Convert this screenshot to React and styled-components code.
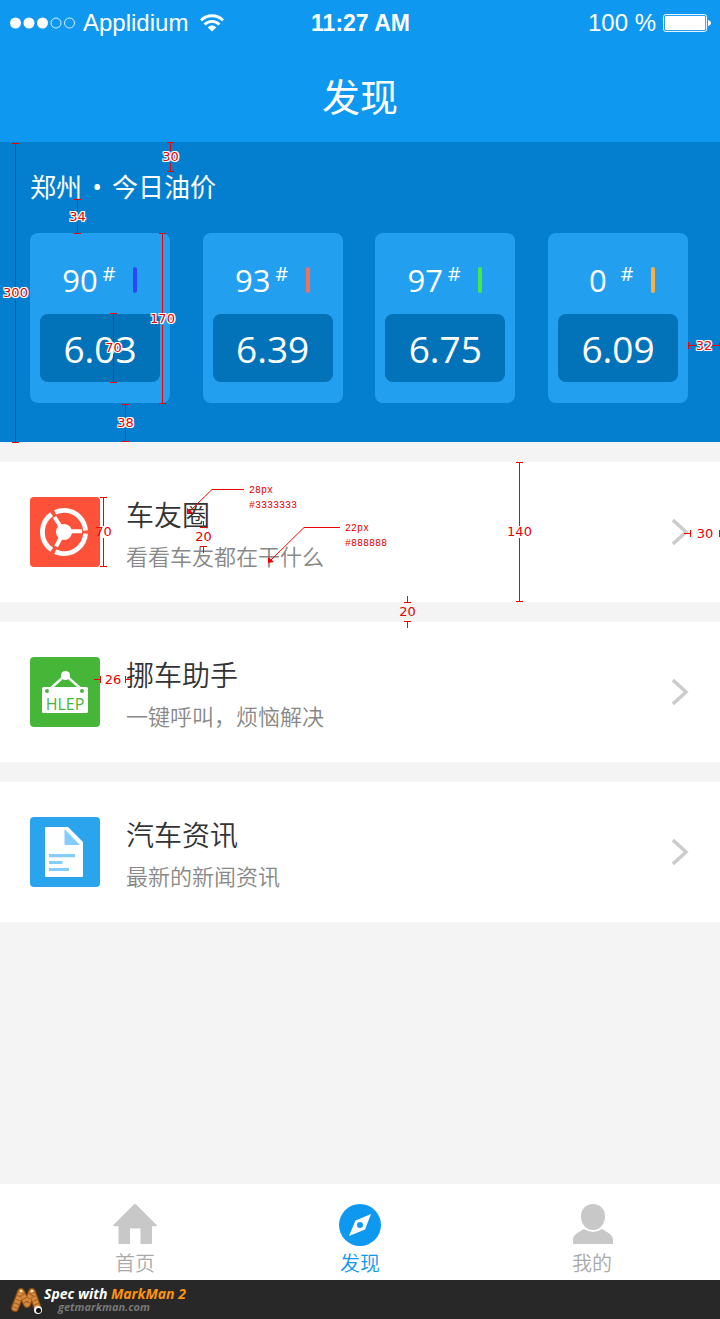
import React from "react";
import styled, { createGlobalStyle, css } from "styled-components";

const cjk = `"Open Sans", "Noto Sans CJK SC", sans-serif`;

const GlobalStyle = createGlobalStyle`
  * { box-sizing: border-box; }
  body { margin: 0; background: #f4f4f4; font-family: "Noto Sans CJK SC", sans-serif; font-weight: 350; }
  h1, h2, h3, p, ul { margin: 0; padding: 0; font-weight: inherit; }
  a { color: inherit; text-decoration: none; }
  svg { display: block; flex: none; }
`;

const Page = styled.div`
  display: flex;
  flex-direction: column;
  min-height: 100vh;
`;

/* ---------- header ---------- */
const Header = styled.header`
  background: #0f98f0;
  color: #fff;
`;
const StatusBar = styled.div`
  display: grid;
  grid-template-columns: 1fr auto 1fr;
  align-items: center;
  height: 46px;
  padding: 0 9px 0 10px;
  font-family: "Liberation Sans", sans-serif;
  font-size: 24px;
  font-weight: 400;
`;
const StatusGroup = styled.div`
  display: flex;
  align-items: center;
  justify-content: ${(p) => (p.$end ? "flex-end" : "flex-start")};
  gap: 7px;
`;
const Carrier = styled.span`
  margin-right: 5px;
`;
const Clock = styled.time`
  font-size: 23px;
  font-weight: 700;
`;
const PageTitle = styled.h1`
  height: 96px;
  font-size: 38px;
  font-weight: 400;
  line-height: 98px;
  text-align: center;
`;

/* ---------- oil prices ---------- */
const PricePanel = styled.section`
  position: relative;
  height: 300px;
  padding: 25px 32px 0 30px;
  background: #047fcf;
  color: #fff;
`;
const PanelTitle = styled.h2`
  display: flex;
  height: 66px;
  font-size: 26px;
  font-weight: 400;
  line-height: 38px;
`;
const Dot = styled.span`
  width: 30px;
  font-family: ${cjk};
  text-align: center;
`;
const Cards = styled.div`
  display: flex;
  justify-content: space-between;
`;
const Card = styled.article`
  width: 140px;
  height: 170px;
  padding: 0 10px;
  border-radius: 8px;
  background: #229fee;
  font-family: ${cjk};
  font-weight: 400;
`;
const Grade = styled.div`
  display: flex;
  align-items: center;
  height: 81px;
  padding: 12px 0 0 22px;
`;
const GradeNumber = styled.span`
  width: 36px;
  font-size: 31px;
  line-height: 40px;
  text-align: center;
`;
const Hash = styled.sup`
  width: 22px;
  margin-bottom: 12px;
  font-size: 20px;
  line-height: 24px;
  text-align: center;
`;
const GradeBar = styled.span`
  width: 4px;
  height: 26px;
  margin-left: 13px;
  border-radius: 2px;
  background: ${(p) => p.$color};
`;
const Price = styled.div`
  height: 68px;
  border-radius: 8px;
  background: #0273b9;
  font-size: 37px;
  line-height: 70px;
  text-align: center;
`;

/* ---------- menu ---------- */
const Menu = styled.nav`
  flex: 1;
  display: flex;
  flex-direction: column;
  gap: 20px;
  padding: 20px 0;
`;
const Row = styled.div`
  position: relative;
  background: #fff;
`;
const RowLink = styled.a`
  display: flex;
  align-items: center;
  gap: 26px;
  height: 140px;
  padding: 0 30px;
`;
const RowText = styled.div`
  flex: 1;
  padding-top: 4px;
`;
const RowTitle = styled.h3`
  color: #333;
  font-size: 28px;
  line-height: 42px;
`;
const RowNote = styled.p`
  color: #888;
  font-size: 22px;
  line-height: 40px;
`;

/* ---------- tab bar ---------- */
const TabBar = styled.nav`
  display: grid;
  grid-template-columns: 226fr 224fr 240fr;
  height: 96px;
  padding: 19px 8px 0 22px;
  background: #fff;
`;
const Tab = styled.a`
  display: flex;
  flex-direction: column;
  align-items: center;
  color: ${(p) => (p.$active ? "#0f98f0" : "#aaa")};
  font-size: 20px;
  line-height: 34px;
`;

/* ---------- footer ---------- */
const Footer = styled.footer`
  display: flex;
  align-items: center;
  gap: 1px;
  height: 39px;
  padding-left: 11px;
  background: #282828;
  color: #fff;
  font-family: "Open Sans", sans-serif;
  font-style: italic;
  font-weight: 700;
`;
const Credit = styled.div`
  font-size: 14px;
  line-height: 14px;
  em { color: #ff9310; }
`;
const Site = styled.a`
  display: block;
  padding-left: 14px;
  color: #777;
  font-size: 11px;
  line-height: 12px;
`;

/* ---------- spec marks ---------- */
const Mark = styled.div`
  position: absolute;
  z-index: 1;
  display: flex;
  align-items: center;
  left: ${(p) => p.$x}px;
  top: ${(p) => p.$y}px;
  color: #f00000;
  pointer-events: none;
  ${(p) =>
    p.$across
      ? css`width: ${p.$size}px; height: 7px;`
      : css`flex-direction: column; width: 7px; height: ${p.$size}px;`}
  ${(p) => p.$right !== undefined && css`left: auto; right: ${p.$right}px;`}
`;
const Cap = styled.i`
  flex: none;
  background: currentColor;
  ${(p) => (p.$across ? css`width: 1px; height: 7px;` : css`width: 7px; height: 1px;`)}
`;
const Line = styled.i`
  background: currentColor;
  ${(p) =>
    p.$size !== undefined
      ? css`flex: none; ${p.$across ? "width" : "height"}: ${p.$size}px;`
      : css`flex: 1;`}
  ${(p) => (p.$across ? css`height: 1px;` : css`width: 1px;`)}
`;
const MarkLabel = styled.span`
  flex: ${(p) => (p.$open ? "1" : "none")};
  display: flex;
  align-items: center;
  justify-content: center;
  color: #e80000;
  font: 400 13px/12px "DejaVu Sans", sans-serif;
  text-shadow: ${(p) =>
    p.$halo
      ? "1px 0 #fff, -1px 0 #fff, 0 1px #fff, 0 -1px #fff, 1px 1px #fff, -1px -1px #fff, 1px -1px #fff, -1px 1px #fff"
      : "none"};
`;
const Callout = styled.div`
  position: absolute;
  z-index: 1;
  left: ${(p) => p.$x}px;
  top: ${(p) => p.$y}px;
  display: flex;
  gap: 5px;
  color: #f00000;
  pointer-events: none;
`;
const CalloutText = styled.div`
  margin-top: -6px;
  color: #e80000;
  font: 400 10px/15px "Liberation Mono", monospace;
`;

function Measure({ x, y, right, size, label, across, halo, tails }) {
  if (tails) {
    return (
      <Mark $x={x} $y={y} $right={right} $size={size} $across={across}>
        <Line $across={across} $size={6} />
        <Cap $across={across} />
        <MarkLabel $open>{label}</MarkLabel>
        <Cap $across={across} />
        {tails === "both" && <Line $across={across} $size={6} />}
      </Mark>
    );
  }
  return (
    <Mark $x={x} $y={y} $right={right} $size={size} $across={across}>
      <Cap $across={across} />
      <Line $across={across} />
      <MarkLabel $halo={halo}>{label}</MarkLabel>
      <Line $across={across} />
      <Cap $across={across} />
    </Mark>
  );
}

function Pointer({ x, y, width, height, lines }) {
  return (
    <Callout $x={x} $y={y}>
      <svg width={width} height={height} fill="none" stroke="currentColor">
        <path d={`M2 ${height - 2} L${height} .5 H${width}`} />
        <path d={`M0 ${height} v-6 l6 5 z`} fill="currentColor" stroke="none" />
      </svg>
      <CalloutText>
        {lines.map((l) => (
          <div key={l}>{l}</div>
        ))}
      </CalloutText>
    </Callout>
  );
}

/* ---------- drawings ---------- */
const Signal = () => (
  <svg width="66" height="12" fill="#fff">
    <circle cx="5.5" cy="6" r="5.5" />
    <circle cx="19" cy="6" r="5.5" />
    <circle cx="32.500" cy="6" r="5.5" />
    <circle cx="46" cy="6" r="5" fill="none" stroke="#fff" strokeWidth=".8" />
    <circle cx="59.500" cy="6" r="5" fill="none" stroke="#fff" strokeWidth=".8" />
  </svg>
);
const Wifi = () => (
  <svg width="24" height="18" fill="none" stroke="#fff" strokeWidth="2.800">
    <path d="M1 6.400C7 .2 17 .2 23 6.400" />
    <path d="M4.600 10.600c4.200-4.200 10.600-4.200 14.800 0" />
    <path d="M7.800 13.400c2.400-2.600 6-2.600 8.400 0L12 17.600z" fill="#fff" stroke="none" />
  </svg>
);
const Battery = () => (
  <svg width="48" height="18" fill="#fff">
    <rect x=".6" y=".6" width="43" height="16.800" rx="2" fill="none" stroke="#fff" strokeWidth="1" />
    <rect x="2" y="2" width="40.200" height="14" rx="1" />
    <path d="M45 6c4 1 4 5 0 6z" />
  </svg>
);
const WheelIcon = () => (
  <svg width="70" height="70" viewBox="0 0 70 70">
    <rect width="70" height="70" rx="4" fill="#fd5139" />
    <g fill="none" stroke="#fff" transform="translate(34 35)">
      <circle r="21.600" strokeWidth="4.800" strokeDasharray="41.240 4" transform="rotate(4)" />
      <path d="M0 -.8H18M0 0L-9.500-15M0 0L-8 14.500" strokeWidth="4" />
      <circle r="8" fill="#fff" stroke="none" />
    </g>
  </svg>
);
const HelpIcon = () => (
  <svg width="70" height="70" viewBox="0 0 70 70">
    <rect width="70" height="70" rx="4" fill="#46b639" />
    <path d="M21 31L35.500 18L50 31" fill="none" stroke="#fff" strokeWidth="2.400" />
    <circle cx="35.500" cy="18.500" r="4.500" fill="#fff" />
    <rect x="12" y="30" width="46" height="26" rx="1.500" fill="#fff" />
    <g fill="#46b639">
      <circle cx="17" cy="34" r="2" />
      <circle cx="52" cy="34" r="2" />
      <text x="35" y="53" textAnchor="middle" fontFamily="Open Sans" fontSize="16" fontWeight="400">HLEP</text>
    </g>
  </svg>
);
const NewsIcon = () => (
  <svg width="70" height="70" viewBox="0 0 70 70">
    <rect width="70" height="70" rx="4" fill="#2ba4ee" />
    <path d="M16 10H38L53 25V59a1 1 0 0 1-1 1H16a1 1 0 0 1-1-1V11a1 1 0 0 1 1-1z" fill="#fff" />
    <path d="M34.500 12V27a1 1 0 0 0 1 1H50zM19 37H45v3.300H19zM19 44H32.500v3H19zM19 51H39v3H19z" fill="#85ccff" />
  </svg>
);
const Chevron = () => (
  <svg width="18" height="28" fill="none" stroke="#ccc" strokeWidth="3.500">
    <path d="M1 2L14 14L1 26" />
  </svg>
);
const HomeIcon = () => (
  <svg width="44" height="43" fill="#c8c8c8">
    <path d="M20.800 1.500a1.700 1.700 0 0 1 2.400 0L43.600 22q.8 1.200-.6 1.200H39V40a1 1 0 0 1-1 1H27.500V25.500H17V41H6.500a1 1 0 0 1-1-1V23.200H1q-1.400 0-.6-1.200z" />
  </svg>
);
const CompassIcon = () => (
  <svg width="44" height="43">
    <circle cx="22" cy="22" r="21" fill="#0f98f0" />
    <path d="M33 11L27 26.500L11 33L17.500 17.500z" fill="#fff" />
    <circle cx="22" cy="22" r="3" fill="#0f98f0" />
  </svg>
);
const PersonIcon = () => (
  <svg width="44" height="43" fill="#c8c8c8">
    <path d="M23 1C30 1 35 6 35 13C35 21 30 27 23 27S11 21 11 13C11 6 16 1 23 1z" />
    <path d="M14 26Q23 32 32 26C37 29 42 31 43 36V40a1 1 0 0 1-1 1H4a1 1 0 0 1-1-1V36C4 31 9 29 14 26z" />
  </svg>
);
const MarkManLogo = () => (
  <svg width="32" height="32" fill="none" strokeLinecap="round">
    <path d="M4 24L10 8L16 20L21 8L27 25" stroke="#8a4c14" strokeWidth="8" strokeLinejoin="round" />
    <path d="M4 24L10 8L16 20L21 8L27 25" stroke="#d88a3c" strokeWidth="5.500" strokeLinejoin="round" />
    <path d="M4 24L10 8L16 20L21 8L27 25" stroke="#a8642a" strokeWidth="6" strokeDasharray="1 3" strokeLinecap="butt" />
    <circle cx="10" cy="7" r="1.500" fill="#ffe2a0" />
    <circle cx="21" cy="7" r="1.500" fill="#ffe2a0" />
    <circle cx="27" cy="26" r="4" fill="#f4f4f4" />
    <circle cx="27.500" cy="26.500" r="2.500" fill="#111" />
  </svg>
);

const prices = [
  { grade: "90", price: "6.03", color: "#2b46ff" },
  { grade: "93", price: "6.39", color: "#f26f5a" },
  { grade: "97", price: "6.75", color: "#46ea48" },
  { grade: "0", price: "6.09", color: "#fbb040" },
];

function MenuRow({ icon, title, note, children }) {
  return (
    <Row>
      <RowLink href="#">
        {icon}
        <RowText>
          <RowTitle>{title}</RowTitle>
          <RowNote>{note}</RowNote>
        </RowText>
        <Chevron />
      </RowLink>
      {children}
    </Row>
  );
}

export default function App() {
  return (
    <Page>
      <GlobalStyle />
      <Header>
        <StatusBar>
          <StatusGroup>
            <Signal />
            <Carrier>Applidium</Carrier>
            <Wifi />
          </StatusGroup>
          <Clock>11:27 AM</Clock>
          <StatusGroup $end>
            <span>100 %</span>
            <Battery />
          </StatusGroup>
        </StatusBar>
        <PageTitle>发现</PageTitle>
      </Header>

      <PricePanel>
        <PanelTitle>
          <span>郑州</span>
          <Dot>•</Dot>
          <span>今日油价</span>
        </PanelTitle>
        <Cards>
          {prices.map((p) => (
            <Card key={p.grade}>
              <Grade>
                <GradeNumber>{p.grade}</GradeNumber>
                <Hash>#</Hash>
                <GradeBar $color={p.color} />
              </Grade>
              <Price>{p.price}</Price>
            </Card>
          ))}
        </Cards>
        <Measure x={167} y={0} size={30} label="30" halo />
        <Measure x={12} y={1} size={300} label="300" halo />
        <Measure x={74} y={57} size={35} label="34" halo />
        <Measure x={159} y={91} size={171} label="170" halo />
        <Measure x={110} y={171} size={70} label="70" halo />
        <Measure x={122} y={262} size={38} label="38" halo />
        <Measure right={0} y={200} size={32} label="32" across halo />
      </PricePanel>

      <Menu>
        <MenuRow icon={<WheelIcon />} title="车友圈" note="看看车友都在干什么">
          <Measure x={100} y={35} size={70} label="70" />
          <Measure x={200} y={59} size={32} label="20" tails="both" />
          <Measure x={516} y={0} size={140} label="140" />
          <Measure x={404} y={134} size={32} label="20" tails="both" />
          <Measure right={0} y={68} size={36} label="30" across tails="start" />
          <Pointer x={187} y={27} width={57} height={25} lines={["28px", "#3333333"]} />
          <Pointer x={268} y={65} width={72} height={36} lines={["22px", "#888888"]} />
        </MenuRow>
        <MenuRow icon={<HelpIcon />} title="挪车助手" note="一键呼叫，烦恼解决">
          <Measure x={94} y={54} size={38} label="26" across tails="both" />
        </MenuRow>
        <MenuRow icon={<NewsIcon />} title="汽车资讯" note="最新的新闻资讯" />
      </Menu>

      <TabBar>
        <Tab href="#"><HomeIcon />首页</Tab>
        <Tab href="#" $active aria-current="page"><CompassIcon />发现</Tab>
        <Tab href="#"><PersonIcon />我的</Tab>
      </TabBar>

      <Footer>
        <MarkManLogo />
        <div>
          <Credit>Spec with <em>MarkMan 2</em></Credit>
          <Site href="#">getmarkman.com</Site>
        </div>
      </Footer>
    </Page>
  );
}
